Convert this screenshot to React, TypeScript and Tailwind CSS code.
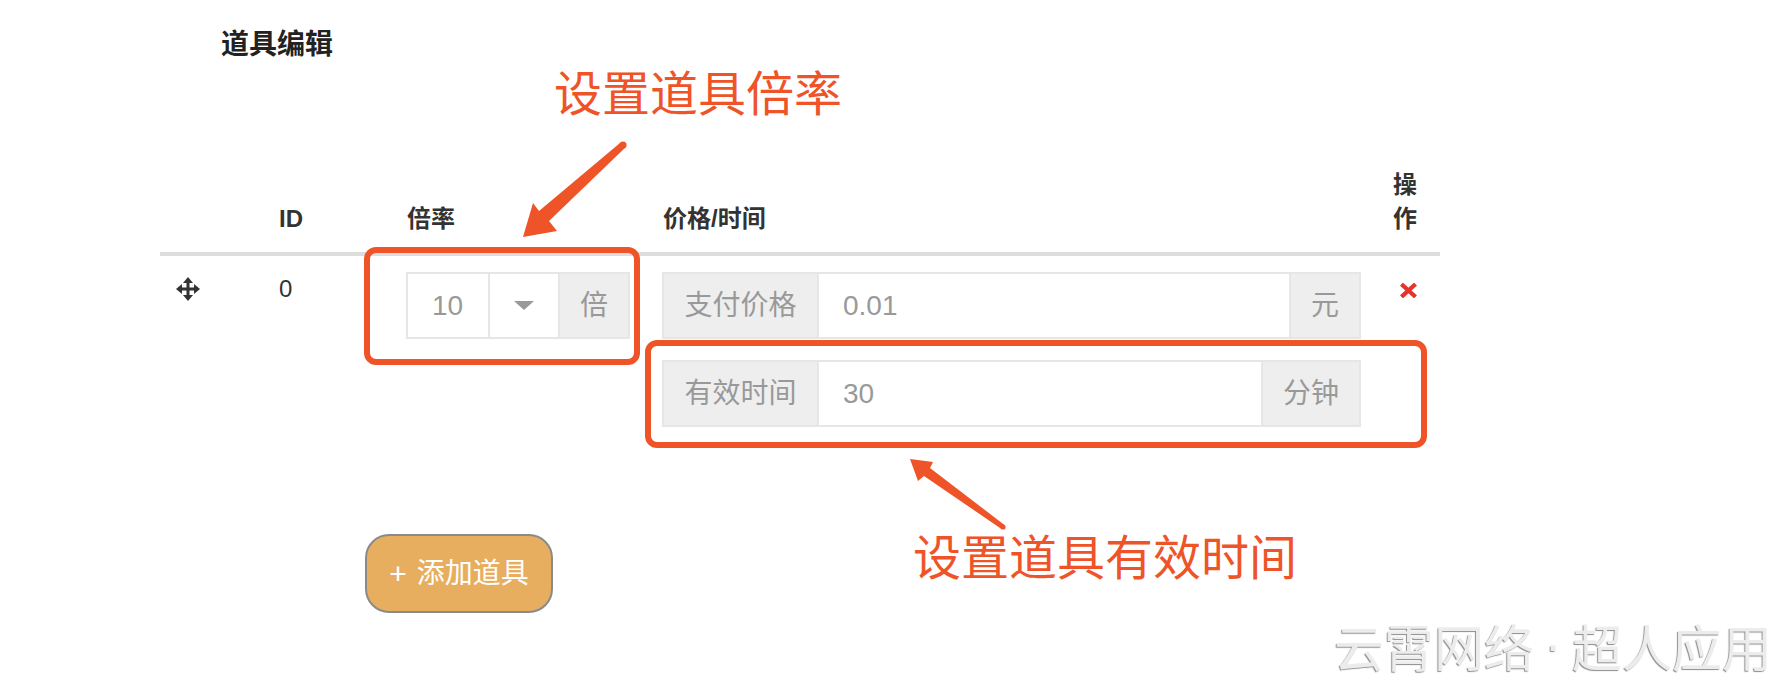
import React from 'react';

const RED = '#ee5428';

// glyphicon-like "move" cross
const MoveIcon = () => (
    <svg width="24" height="24" viewBox="0 0 24 24" className="block">
        <rect x="10.5" y="5" width="3" height="14" fill="#333" />
        <rect x="5" y="10.5" width="14" height="3" fill="#333" />
        <polygon points="12,0 17,6 7,6" fill="#333" />
        <polygon points="12,24 17,18 7,18" fill="#333" />
        <polygon points="0,12 6,7 6,17" fill="#333" />
        <polygon points="24,12 18,7 18,17" fill="#333" />
    </svg>
);

const RemoveIcon = () => (
    <svg width="17" height="15" viewBox="0 0 17 15" className="block">
        <path d="M3 2.5 L14 12.5 M14 2.5 L3 12.5" stroke="#e8322a" strokeWidth="4.2" strokeLinecap="square" />
    </svg>
);

// one "addon | input | addon" row
const PriceGroup = ({ label, value, unit, unitW }: { label: string; value: string; unit: string; unitW: string }) => (
    <div className="flex h-[67px] w-full border-2 border-[#e6e6e6] text-[28px] text-[#999]">
        <div className="w-[153px] bg-[#eee] flex items-center justify-center">{label}</div>
        <div className="flex-1 border-l-2 border-[#e6e6e6] bg-white flex items-center pl-[24px]">{value}</div>
        <div className={`${unitW} border-l-2 border-[#e6e6e6] bg-[#eee] flex items-center justify-center`}>{unit}</div>
    </div>
);

export default function App() {
    const th = 'px-4 py-4 border-b-4 border-[#ddd] text-[24px] leading-[34px] font-bold text-[#333]';
    const td = 'self-start px-4 pt-4 pb-4 text-[24px] leading-[34px] text-[#333]';

    return (
        <div className="relative w-[1786px] h-[680px] bg-white overflow-hidden font-['Liberation_Sans','Noto_Sans_CJK_SC',sans-serif]">
            {/* Title */}
            <h2 className="pl-[221px] pt-[25px] text-[28px] leading-[40px] font-bold text-[#222]">道具编辑</h2>

            {/* Table */}
            <div className="ml-[160px] mt-[87px] w-[1280px] grid grid-cols-[103px_128px_256px_730px_63px] items-end">
                <div className={th}>&nbsp;</div>
                <div className={th}>ID</div>
                <div className={th}>倍率</div>
                <div className={th}>价格/时间</div>
                <div className={th}>操作</div>

                <div className={td}>
                    <div className="h-[34px] flex items-center"><MoveIcon /></div>
                </div>
                <div className={td}>0</div>
                <div className={td}>
                    <div className="flex h-[67px] w-[224px] -ml-[1px] border-2 border-[#e6e6e6] text-[28px] text-[#999]">
                        <div className="w-[80px] bg-white flex items-center pl-[24px]">10</div>
                        <div className="w-[70px] border-l-2 border-[#e6e6e6] bg-white flex items-center justify-center">
                            <svg width="20" height="9" viewBox="0 0 20 9"><polygon points="0,0 20,0 10,9" fill="#999" /></svg>
                        </div>
                        <div className="flex-1 border-l-2 border-[#e6e6e6] bg-[#eee] flex items-center justify-center">倍</div>
                    </div>
                </div>
                <div className={`${td} -ml-[1px]`}>
                    <div className="flex flex-col gap-[21px]">
                        <PriceGroup label="支付价格" value="0.01" unit="元" unitW="w-[70px]" />
                        <PriceGroup label="有效时间" value="30" unit="分钟" unitW="w-[98px]" />
                    </div>
                </div>
                <div className={td}>
                    <div className="h-[34px] flex items-center justify-center pt-[3px]"><RemoveIcon /></div>
                </div>
            </div>

            {/* Add button */}
            <div className="ml-[365px] mt-[91px]">
                <button className="w-[188px] h-[79px] rounded-[24px] border-2 border-[#8a8a8a] bg-[#e8ae5f] text-white text-[28px] flex items-center justify-center gap-[10px]">
                    <span className="font-light text-[30px]">+</span>
                    <span>添加道具</span>
                </button>
            </div>

            {/* Annotations */}
            <div className="absolute left-[364px] top-[247px] w-[276px] h-[118px] border-[6px] border-[#ee5428] rounded-[12px]" />
            <div className="absolute left-[645px] top-[340px] w-[782px] h-[108px] border-[6px] border-[#ee5428] rounded-[12px]" />

            <div className="absolute left-[554px] top-[66px] text-[48px] leading-[48px] text-[#ee5428] font-['Noto_Sans_CJK_SC',sans-serif] whitespace-nowrap">
                设置道具倍率
            </div>
            <div className="absolute left-[913px] top-[530px] text-[48px] leading-[48px] text-[#ee5428] font-['Noto_Sans_CJK_SC',sans-serif] whitespace-nowrap">
                设置道具有效时间
            </div>

            <svg className="absolute inset-0 pointer-events-none" width="1786" height="680" viewBox="0 0 1786 680">
                <polygon points="620.6,142.4 539,211 533,203 523,237 557,231 549,221 625.4,147.6" fill={RED} />
                <circle cx="623" cy="145" r="3.6" fill={RED} />
                <polygon points="1004.5,525 930,468 933,462 910,459 918,481 924,476 1001.5,529" fill={RED} />
                <circle cx="1003" cy="527" r="2.6" fill={RED} />
            </svg>

            {/* Watermark */}
            <div className="absolute left-[1334px] top-[620px] flex text-[50px] leading-[50px] text-[#ececec] font-['Noto_Sans_CJK_SC',sans-serif] whitespace-nowrap [text-shadow:-1px_1px_1px_#8c8c8c]">
                <span>云霄网络</span>
                <span className="w-[38px] text-center font-['Liberation_Sans',sans-serif]">·</span>
                <span>超人应用</span>
            </div>
        </div>
    );
}
